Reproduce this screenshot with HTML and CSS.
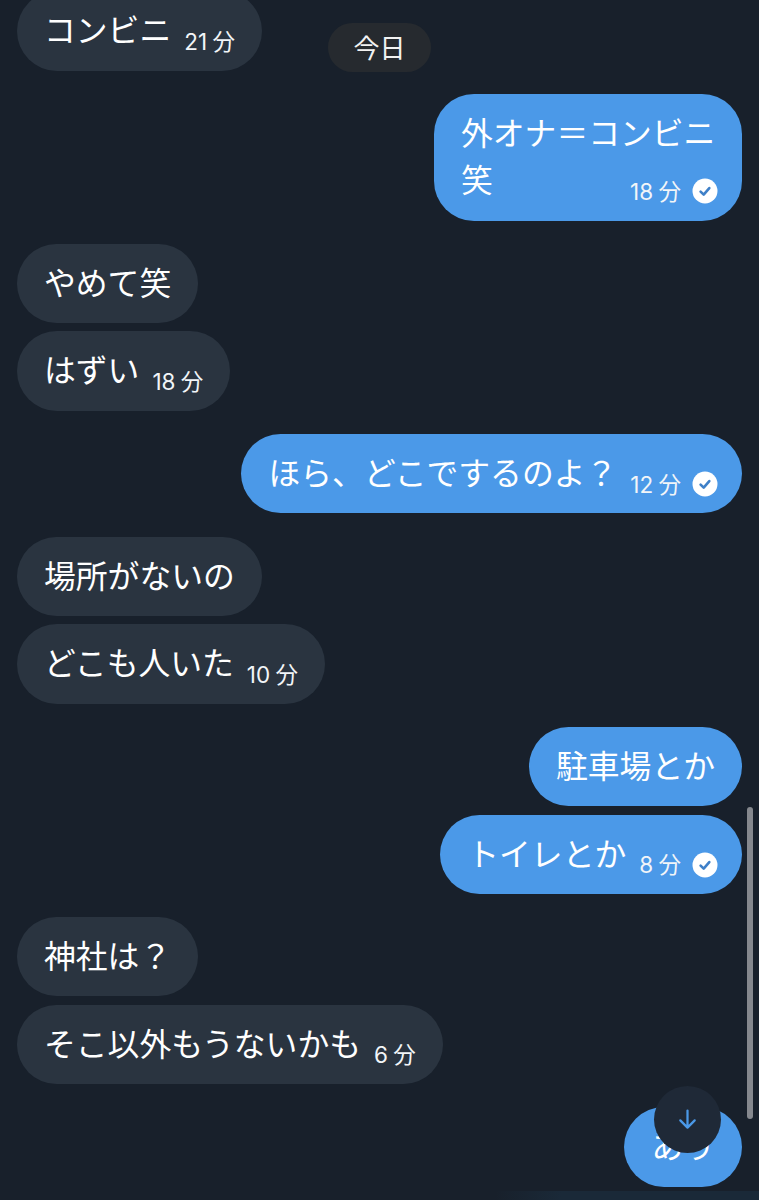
FILE: index.html
```html
<!DOCTYPE html>
<html lang="ja">
<head>
<meta charset="utf-8">
<title>チャット</title>
<link rel="stylesheet" href="styles.css">
</head>
<body>
<main class="chat">
  <div class="thread">
    <div class="group in"><div class="bubble"><span class="text">コンビニ</span><span class="meta">21 分</span></div></div>
    <div class="group out"><div class="bubble wrap"><span class="text">外オナ＝コンビニ</span><div class="last-line"><span class="text">笑</span><span class="meta">18 分<svg class="check" viewBox="0 0 26 26"><circle cx="13" cy="13" r="12.5" fill="#fff"/><path d="M8.6 13.6l3.1 3.1 5.6-6.6" fill="none" stroke="#3f80c8" stroke-width="2.6" stroke-linecap="round" stroke-linejoin="round"/></svg></span></div></div></div>
    <div class="group in">
      <div class="bubble"><span class="text">やめて笑</span></div>
      <div class="bubble"><span class="text">はずい</span><span class="meta">18 分</span></div>
    </div>
    <div class="group out"><div class="bubble read"><span class="text">ほら、どこでするのよ？</span><span class="meta">12 分<svg class="check" viewBox="0 0 26 26"><circle cx="13" cy="13" r="12.5" fill="#fff"/><path d="M8.6 13.6l3.1 3.1 5.6-6.6" fill="none" stroke="#3f80c8" stroke-width="2.6" stroke-linecap="round" stroke-linejoin="round"/></svg></span></div></div>
    <div class="group in">
      <div class="bubble"><span class="text">場所がないの</span></div>
      <div class="bubble"><span class="text">どこも人いた</span><span class="meta">10 分</span></div>
    </div>
    <div class="group out">
      <div class="bubble"><span class="text">駐車場とか</span></div>
      <div class="bubble read"><span class="text">トイレとか</span><span class="meta">8 分<svg class="check" viewBox="0 0 26 26"><circle cx="13" cy="13" r="12.5" fill="#fff"/><path d="M8.6 13.6l3.1 3.1 5.6-6.6" fill="none" stroke="#3f80c8" stroke-width="2.6" stroke-linecap="round" stroke-linejoin="round"/></svg></span></div>
    </div>
    <div class="group in">
      <div class="bubble"><span class="text">神社は？</span></div>
      <div class="bubble"><span class="text">そこ以外もうないかも</span><span class="meta">6 分</span></div>
    </div>
    <div class="group out"><div class="bubble"><span class="text">あり</span></div></div>
  </div>
  <div class="date-pill">今日</div>
  <div class="scrollbar"></div>
  <button class="fab" aria-label="最新へ"><svg viewBox="0 0 24 24"><path d="M12 4v15M5.6 12.8l6.4 6.4 6.4-6.4" fill="none" stroke="#4b99e8" stroke-width="2" stroke-linecap="round" stroke-linejoin="round"/></svg></button>
  <div class="bottom-glow"></div>
</main>
</body>
</html>
```
FILE: styles.css
```css
* { box-sizing: border-box; }
html, body { margin: 0; padding: 0; background: #18202b; }
.chat {
  position: relative;
  width: 759px;
  height: 1200px;
  overflow: hidden;
  background: #18202b;
  color: #fff;
  font-family: "Noto Sans CJK JP", "Inter", sans-serif;
}
.thread {
  display: flex;
  flex-direction: column;
  gap: 23.5px;
  padding: 0 17px;
  margin-top: -8.7px;
}
.group { display: flex; flex-direction: column; gap: 8.3px; }
.in { align-items: flex-start; }
.out { align-items: flex-end; }
.bubble {
  display: flex;
  align-items: flex-start;
  height: 79.2px;
  padding: 14px 27px 18px 27px;
  border-radius: 40px;
  font-size: 31.8px;
  line-height: 47px;
}
.in .bubble { background: #2a3440; }
.out .bubble { background: #4b99e8; }
.text { white-space: nowrap; }
.meta {
  display: flex;
  align-items: center;
  gap: 11px;
  height: 47px;
  margin: 12.5px 0 -12.5px 13px;
  font-family: "Inter", "Noto Sans CJK JP", sans-serif;
  font-size: 22.5px;
  line-height: 47px;
  word-spacing: -1px;
  white-space: nowrap;
  color: #f2f5f8;
}
.check { width: 26px; height: 26px; flex: none; }
.bubble.read { padding-right: 24px; }
.bubble.wrap { display: block; width: 308px; height: 126.5px; padding-right: 24px; }
.last-line { display: flex; justify-content: space-between; }
.date-pill {
  position: absolute;
  left: 328px;
  top: 23px;
  width: 103px;
  height: 49px;
  border-radius: 25px;
  background: #262a2f;
  font-size: 26px;
  line-height: 47px;
  text-align: center;
  color: #f2f2f2;
}
.scrollbar {
  position: absolute;
  left: 747px;
  top: 807px;
  width: 6px;
  height: 312px;
  border-radius: 3px;
  background: #85888e;
}
.fab {
  position: absolute;
  left: 654px;
  top: 1086px;
  width: 67px;
  height: 67px;
  padding: 20px;
  border: 0;
  border-radius: 50%;
  background: #1f2937;
  display: flex;
}
.fab svg { width: 100%; height: 100%; display: block; }
.bottom-glow {
  position: absolute;
  left: 495px;
  top: 1191px;
  width: 264px;
  height: 9px;
  background: linear-gradient(90deg, #18202b, #1a2938 25%, #1a2938);
}
```
